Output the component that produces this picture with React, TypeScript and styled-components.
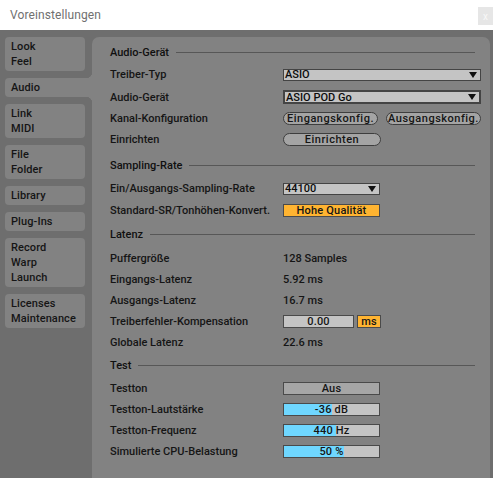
import React from "react";
import styled, { createGlobalStyle, css } from "styled-components";

const GlobalStyle = createGlobalStyle`
  html, body {
    margin: 0;
    padding: 0;
    background: #6e6e6e;
  }
  body {
    font-family: Roboto, "Liberation Sans", sans-serif;
  }
`;

const Window = styled.div`
  width: 493px;
  height: 478px;
  display: flex;
  flex-direction: column;
  overflow: hidden;
  background: #6e6e6e;
`;

const TitleBar = styled.div`
  height: 30px;
  flex: none;
  display: flex;
  align-items: center;
  justify-content: space-between;
  background: #ffffff;
  padding-left: 10px;
`;

const Title = styled.span`
  font-size: 12px;
  color: #707070;
  letter-spacing: 0.1px;
`;

const CloseButton = styled.div`
  width: 15px;
  height: 18px;
  align-self: flex-start;
  margin-top: 7px;
  background: #e6e6e6;
  color: #f8f8f8;
  font-size: 10px;
  display: flex;
  align-items: center;
  justify-content: center;
`;

const Body = styled.div`
  flex: 1;
  display: flex;
  gap: 7px;
  padding: 7px 3px 0 5px;
  min-height: 0;
`;

const Sidebar = styled.div`
  width: 80px;
  flex: none;
  display: flex;
  flex-direction: column;
  gap: 7px;
`;

const Tab = styled.div<{ $active?: boolean }>`
  position: relative;
  padding: 2px 6px;
  border-radius: 4px;
  background: #828282;
  font-size: 11px;
  font-weight: 500;
  line-height: 15px;
  color: #151515;
  letter-spacing: 0.1px;
  ${(p) =>
    p.$active &&
    css`
      margin-right: -7px;
      border-radius: 4px 0 0 4px;
      &::before,
      &::after {
        content: "";
        position: absolute;
        right: 0;
        width: 6px;
        height: 6px;
      }
      &::before {
        top: -6px;
        background: radial-gradient(circle at 0 0, transparent 6px, #828282 6.5px);
      }
      &::after {
        bottom: -6px;
        background: radial-gradient(circle at 0 100%, transparent 6px, #828282 6.5px);
      }
    `}
`;

const Panel = styled.div`
  flex: 1;
  background: #828282;
  border-radius: 7px 7px 0 0;
  padding: 5px 9px 0 18px;
  color: #151515;
  font-size: 11px;
  font-weight: 500;
  letter-spacing: 0;
`;

const SectionHeader = styled.div<{ $h?: number; $mt?: number }>`
  display: flex;
  align-items: center;
  height: ${(p) => p.$h ?? 23}px;
  margin-top: ${(p) => p.$mt ?? 0}px;
  padding-right: 6px;
  font-weight: 500;
  color: #101010;

  &::after {
    content: "";
    flex: 1;
    height: 1px;
    margin-left: 7px;
    background: #575757;
  }
`;

const Row = styled.div<{ $h?: number }>`
  display: grid;
  grid-template-columns: 173px 198px;
  align-items: center;
  height: ${(p) => p.$h ?? 21}px;
`;

const Controls = styled.div<{ $gap?: number }>`
  display: flex;
  gap: ${(p) => p.$gap ?? 8}px;
`;

const Select = styled.div<{ $w?: number; $focus?: boolean }>`
  box-sizing: border-box;
  width: ${(p) => p.$w ?? 198}px;
  height: ${(p) => (p.$focus ? 14 : 12)}px;
  display: flex;
  align-items: center;
  justify-content: space-between;
  padding: 0 3px 0 1px;
  background: #c4c4c4;
  border: ${(p) => (p.$focus ? 2 : 1)}px solid #444;
  font-weight: 500;
  color: #0c0c0c;
  line-height: 1;
`;

const Arrow = styled.span`
  width: 0;
  height: 0;
  border-left: 4px solid transparent;
  border-right: 4px solid transparent;
  border-top: 6px solid #111;
`;

const Pill = styled.div<{ $w: number }>`
  box-sizing: border-box;
  width: ${(p) => p.$w}px;
  height: 13px;
  display: flex;
  align-items: center;
  justify-content: center;
  border: 1px solid #3e3e3e;
  border-radius: 7px;
  background: #a4a4a4;
  letter-spacing: 0.5px;
  line-height: 1;
`;

const Box = styled.div<{ $w?: number; $tone?: "orange" | "light" | "mid" }>`
  box-sizing: border-box;
  width: ${(p) => p.$w ?? 97}px;
  height: 13px;
  display: flex;
  align-items: center;
  justify-content: center;
  border: 1px solid #4a4a4a;
  line-height: 1;
  letter-spacing: 0.2px;
  background: ${(p) =>
    p.$tone === "orange" ? "#ffb431" : p.$tone === "mid" ? "#a6a6a6" : "#c4c4c4"};
`;

const Meter = styled.div`
  position: relative;
  box-sizing: border-box;
  width: 97px;
  height: 13px;
  border: 1px solid #4a4a4a;
  background: #c4c4c4;
  display: flex;
  align-items: center;
  justify-content: center;
  line-height: 1;
  letter-spacing: 0.2px;
  overflow: hidden;
`;

const MeterFill = styled.div`
  position: absolute;
  left: 0;
  top: 0;
  bottom: 0;
  background: #6fd7ff;
`;

const MeterText = styled.span`
  position: relative;
`;

const tabs = [
  ["Look", "Feel"],
  ["Audio"],
  ["Link", "MIDI"],
  ["File", "Folder"],
  ["Library"],
  ["Plug-Ins"],
  ["Record", "Warp", "Launch"],
  ["Licenses", "Maintenance"],
];

const Bar: React.FC<{ value: number; label: string }> = ({ value, label }) => (
  <Meter>
    <MeterFill style={{ width: `${value * 100}%` }} />
    <MeterText>{label}</MeterText>
  </Meter>
);

export default function App() {
  return (
    <>
      <GlobalStyle />
      <Window>
        <TitleBar>
          <Title>Voreinstellungen</Title>
          <CloseButton>x</CloseButton>
        </TitleBar>
        <Body>
          <Sidebar>
            {tabs.map((lines) => (
              <Tab key={lines[0]} $active={lines[0] === "Audio"}>
                {lines.map((l) => (
                  <div key={l}>{l}</div>
                ))}
              </Tab>
            ))}
          </Sidebar>
          <Panel>
            <SectionHeader $h={21}>Audio-Gerät</SectionHeader>
            <Row $h={23}>
              <span>Treiber-Typ</span>
              <Select>
                ASIO <Arrow />
              </Select>
            </Row>
            <Row $h={22}>
              <span>Audio-Gerät</span>
              <Select $focus>
                ASIO POD Go <Arrow />
              </Select>
            </Row>
            <Row>
              <span>Kanal-Konfiguration</span>
              <Controls>
                <Pill $w={95}>Eingangskonfig.</Pill>
                <Pill $w={95}>Ausgangskonfig.</Pill>
              </Controls>
            </Row>
            <Row>
              <span>Einrichten</span>
              <Pill $w={98}>Einrichten</Pill>
            </Row>

            <SectionHeader $h={24} $mt={3}>Sampling-Rate</SectionHeader>
            <Row $h={23}>
              <span>Ein/Ausgangs-Sampling-Rate</span>
              <Select $w={97}>
                44100 <Arrow />
              </Select>
            </Row>
            <Row>
              <span>Standard-SR/Tonhöhen-Konvert.</span>
              <Box $tone="orange">Hohe Qualität</Box>
            </Row>

            <SectionHeader $h={25} $mt={1}>Latenz</SectionHeader>
            <Row $h={22}>
              <span>Puffergröße</span>
              <span>128 Samples</span>
            </Row>
            <Row>
              <span>Eingangs-Latenz</span>
              <span>5.92 ms</span>
            </Row>
            <Row>
              <span>Ausgangs-Latenz</span>
              <span>16.7 ms</span>
            </Row>
            <Row>
              <span>Treiberfehler-Kompensation</span>
              <Controls $gap={3}>
                <Box $w={71}>0.00</Box>
                <Box $w={24} $tone="orange">ms</Box>
              </Controls>
            </Row>
            <Row>
              <span>Globale Latenz</span>
              <span>22.6 ms</span>
            </Row>

            <SectionHeader $h={24}>Test</SectionHeader>
            <Row $h={22}>
              <span>Testton</span>
              <Box $tone="mid">Aus</Box>
            </Row>
            <Row>
              <span>Testton-Lautstärke</span>
              <Bar value={0.5} label="-36 dB" />
            </Row>
            <Row>
              <span>Testton-Frequenz</span>
              <Bar value={0.546} label="440 Hz" />
            </Row>
            <Row>
              <span>Simulierte CPU-Belastung</span>
              <Bar value={0.63} label="50 %" />
            </Row>
          </Panel>
        </Body>
      </Window>
    </>
  );
}
